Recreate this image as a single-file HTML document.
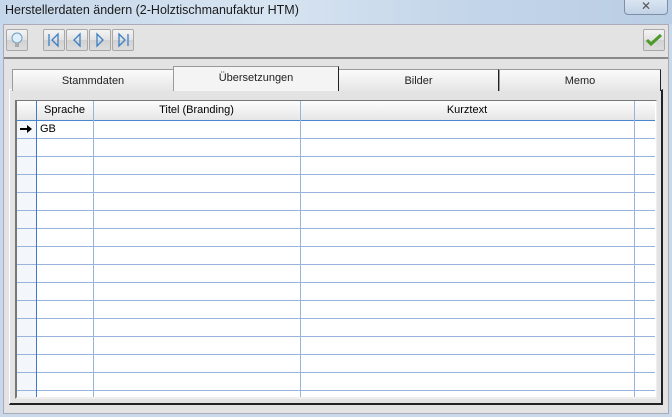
<!DOCTYPE html>
<html><head><style>
*{margin:0;padding:0;box-sizing:border-box}
body{width:672px;height:417px;overflow:hidden;background:#c9d9ea;font-family:"Liberation Sans",sans-serif;font-size:11px;color:#000;position:relative}
.a{position:absolute}
.btn{position:absolute;top:29px;width:22px;height:22px;border:1px solid #a8a8a8;border-radius:2px;background:linear-gradient(#f4f4f4,#e2e2e2 50%,#d2d2d2 51%,#dcdcdc)}
.tab{position:absolute;top:68px;height:22px;background:linear-gradient(#fbfbfb,#e6e6e6);border:1px solid #9a9a9a;border-bottom:none;border-right:1px solid #222;text-align:center;line-height:22px;font-size:11px;color:#222}
.hl{position:absolute;left:17px;width:638px;height:1px;background:#99b4dc}
.vl{position:absolute;top:101px;height:296px;width:1px;background:#99b4dc}
</style></head><body>
<div class="a" style="left:0;top:0;width:672px;height:24px;background:linear-gradient(90deg,#c5d7ea,#d7e4f1 40%,#c3d5e9 70%,#b9cde4)"></div>
<div class="a" style="left:5px;top:3px;font-size:12.5px;color:#1a1a1a">Herstellerdaten ändern (2-Holztischmanufaktur HTM)</div>
<div class="a" style="left:624px;top:-2px;width:44px;height:17px;border:1px solid #7d8fa6;border-radius:0 0 4px 4px;background:linear-gradient(#dbe6f2,#c2d2e5);text-align:center;font-size:12px;line-height:14px;color:#555">✕</div>
<div class="a" style="left:3px;top:24px;width:666px;height:390px;background:#e3e3e3;border:1px solid #aab"></div>
<div class="a" style="left:4px;top:57px;width:664px;height:2px;background:#8a8a8a"></div>
<div class="btn" style="left:6px"><svg width="20" height="20"><circle cx="10" cy="8" r="5" fill="#dfeefa" stroke="#6a9cc7"/><rect x="8" y="13" width="4" height="4" fill="#aaa"/></svg></div>
<div class="btn" style="left:43px"><svg width="20" height="20"><path d="M5 4v12M14 4l-6 6 6 6z" fill="none" stroke="#3c7fc7" stroke-width="1.3"/></svg></div>
<div class="btn" style="left:66px"><svg width="20" height="20"><path d="M13 4l-6 6 6 6z" fill="none" stroke="#3c7fc7" stroke-width="1.3"/></svg></div>
<div class="btn" style="left:89px"><svg width="20" height="20"><path d="M7 4l6 6-6 6z" fill="none" stroke="#3c7fc7" stroke-width="1.3"/></svg></div>
<div class="btn" style="left:112px"><svg width="20" height="20"><path d="M6 4l6 6-6 6zM15 4v12" fill="none" stroke="#3c7fc7" stroke-width="1.3"/></svg></div>
<div class="btn" style="left:643px;width:22px"><svg width="20" height="20"><path d="M3 10l4 4 10-9" fill="none" stroke="#4b9a2a" stroke-width="3"/></svg></div>
<div class="a" style="left:9px;top:89px;width:654px;height:316px;border:1px solid #fff;border-right:2px solid #222;border-bottom:2px solid #222;background:#e3e3e3"></div>
<div class="tab" style="left:12px;top:69px;width:162px">Stammdaten</div>
<div class="tab" style="left:338px;top:69px;width:161px">Bilder</div>
<div class="tab" style="left:499px;top:69px;width:162px">Memo</div>
<div class="tab" style="left:173px;top:66px;width:166px;height:25px;background:#f4f4f4;border-bottom:none">Übersetzungen</div>
<div class="a" style="left:15px;top:100px;width:642px;height:299px;background:#fff;border-left:2px solid #777;border-top:1px solid #777;border-right:1px solid #eee;border-bottom:2px solid #eee"></div>
<div class="a" style="left:17px;top:101px;width:638px;height:19px;background:linear-gradient(#fdfdfd,#e6e6e6)"></div>
<div class="a" style="left:17px;top:120px;width:19px;height:277px;background:#f3f7fb"></div>
<div class="a" style="left:36px;top:104px;width:57px;text-align:center">Sprache</div>
<div class="a" style="left:93px;top:104px;width:207px;text-align:center">Titel (Branding)</div>
<div class="a" style="left:300px;top:104px;width:334px;text-align:center">Kurztext</div>
<div class="a" style="left:40px;top:123px">GB</div>
<svg class="a" style="left:19px;top:124px" width="15" height="10"><path d="M1 5h10" stroke="#000" stroke-width="2"/><path d="M8 1l5 4-5 4z" fill="#000"/></svg>
<div class="hl" style="top:120px;background:#4a86d0"></div>
<div class="hl" style="top:138px"></div><div class="hl" style="top:156px"></div><div class="hl" style="top:174px"></div><div class="hl" style="top:192px"></div><div class="hl" style="top:210px"></div><div class="hl" style="top:228px"></div><div class="hl" style="top:246px"></div><div class="hl" style="top:264px"></div><div class="hl" style="top:282px"></div><div class="hl" style="top:300px"></div><div class="hl" style="top:318px"></div><div class="hl" style="top:336px"></div><div class="hl" style="top:354px"></div><div class="hl" style="top:372px"></div><div class="hl" style="top:390px"></div>
<div class="vl" style="left:36px;background:#3f7bc8"></div>
<div class="vl" style="left:93px"></div>
<div class="vl" style="left:300px"></div>
<div class="vl" style="left:634px"></div>
</body></html>
